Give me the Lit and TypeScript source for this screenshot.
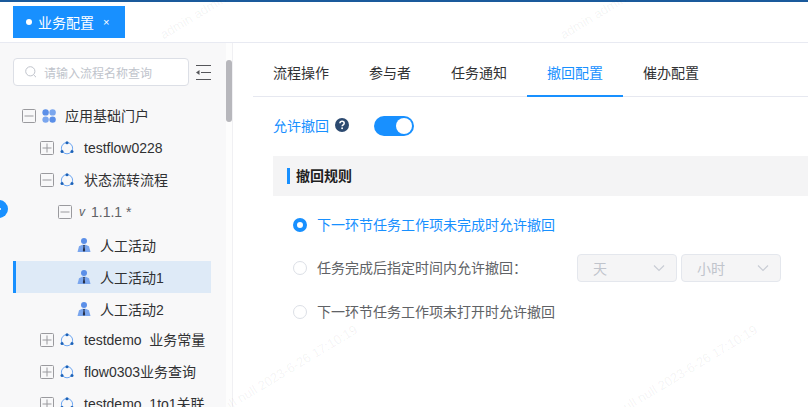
import { LitElement, html, css, svg } from "lit";
import { customElement } from "lit/decorators.js";

const flowIcon = svg`<svg class="ic i-flow" viewBox="0 0 14 14" width="14" height="14"><circle cx="7" cy="7.2" r="5.6" fill="none" stroke="#6aa5f2" stroke-width="1"/><circle cx="7" cy="1.8" r="1.5" fill="#1c62b8"/><circle cx="2" cy="10.4" r="1.5" fill="#1c62b8"/><circle cx="12" cy="10.4" r="1.5" fill="#1c62b8"/></svg>`;
const groupIcon = svg`<svg class="ic" viewBox="0 0 14 14" width="14" height="14"><circle cx="3.6" cy="3.4" r="3.2" fill="#5b8fe8"/><circle cx="10.6" cy="3.4" r="3.2" fill="#7aa6ee"/><circle cx="3.6" cy="10.6" r="3.2" fill="#7aa6ee"/><circle cx="10.6" cy="10.6" r="3.2" fill="#5b8fe8"/></svg>`;
const personIcon = svg`<svg class="ic i-person" viewBox="0 0 14 14" width="14" height="14"><circle cx="7" cy="3" r="3" fill="#5b8fe8"/><path d="M.5 14 L2 8.2 L5.4 6.8 L8.6 6.8 L12 8.2 L13.5 14Z" fill="#7aa6ee"/><path d="M6.2 7h1.6l-.3 1.6.7 4L7 14l-1.2-1.4.7-4z" fill="#26304a"/></svg>`;

type Row = { level: number; box?: "plus" | "minus"; icon?: "group" | "flow" | "person"; ver?: boolean; text: string; selected?: boolean };
const rows: Row[] = [
  { level: 0, box: "minus", icon: "group", text: "应用基础门户" },
  { level: 1, box: "plus", icon: "flow", text: "testflow0228" },
  { level: 1, box: "minus", icon: "flow", text: "状态流转流程" },
  { level: 2, box: "minus", ver: true, text: "1.1.1 *" },
  { level: 3, icon: "person", text: "人工活动" },
  { level: 3, icon: "person", text: "人工活动1", selected: true },
  { level: 3, icon: "person", text: "人工活动2" },
  { level: 1, box: "plus", icon: "flow", text: "testdemo  业务常量" },
  { level: 1, box: "plus", icon: "flow", text: "flow0303业务查询" },
  { level: 1, box: "plus", icon: "flow", text: "testdemo_1to1关联" },
];
const tabs = ["流程操作", "参与者", "任务通知", "撤回配置", "催办配置"];
const marks = [
  { x: 165, y: 42 }, { x: 565, y: 42 }, { x: 155, y: 458 }, { x: 555, y: 458 },
];
const hasCjk = (s: string) => /[\u4e00-\u9fff]/.test(s);

@customElement("app-root")
export class AppRoot extends LitElement {
  static styles = css`
    :host { display: block; width: 808px; height: 407px; overflow: hidden; position: relative; background: #fff;
      font-family: "Liberation Sans", "Noto Sans CJK SC", sans-serif; font-size: 14px; color: #303133; }
    .top { height: 2px; background: #1a5a9c; }
    .head { height: 40px; border-bottom: 1px solid #e8eaf2; display: flex; align-items: center; padding-left: 13px; box-sizing: content-box; }
    .htab { width: 112px; height: 32px; background: #1890ff; color: #fff; display: flex; align-items: center; box-sizing: border-box; padding-left: 13px; }
    .dot { width: 6px; height: 6px; border-radius: 50%; background: #fff; margin-right: 6px; }
    .x { font-size: 11px; margin-left: 9px; }
    .body { display: flex; height: 364px; }
    .side { width: 226px; background: #f8f8f9; padding: 15px 15px 0 13px; box-sizing: border-box; overflow: hidden; flex: none; position: relative; z-index: 1; }
    .track { width: 7px; background: #fdfdfd; flex: none; border-right: 1px solid #f0f0f3; box-sizing: border-box; }
    .searchrow { display: flex; align-items: center; gap: 7px; height: 28px; margin-bottom: 14px; }
    .search { width: 176px; height: 28px; box-sizing: border-box; background: #fff; border: 1px solid #dcdfe6; border-radius: 4px; display: flex; align-items: center; padding-left: 11px; color: #c0c4cc; font-size: 12px; gap: 7px; }
    .tree { width: 198px; }
    .row { height: 32px; display: flex; align-items: center; white-space: pre; overflow: hidden; box-sizing: border-box; }
    .row:nth-child(5) { margin-top: 1px; }
    .row:nth-child(8) { margin-top: -1px; }
    .row.sel { background: #deeaf7; border-left: 3px solid #1890ff; }
    .box { width: 14px; height: 14px; flex: none; display: block; margin-right: 6px; }
    .ic { flex: none; margin-right: 9px; }
    .i-flow { margin-right: 10px; }
    .i-person { margin-left: 1px; margin-right: 9px; }
    .ver { font-style: italic; font-size: 12px; color: #606266; margin-right: 6px; margin-left: 1px; }
    .muted { color: #606266; }
    .main { flex: 1; min-width: 0; }
    .tabs { display: flex; height: 54px; margin-left: 20px; border-bottom: 1px solid #e6e8f0; box-sizing: border-box; }
    .tab { padding: 4px 20px 0; display: flex; align-items: center; height: 54px; box-sizing: border-box; }
    .tab.on { color: #1890ff; border-bottom: 2px solid #1890ff; padding-top: 6px; }
    .content { padding: 19px 0 0 40px; }
    .allow { display: flex; align-items: center; height: 20px; color: #1890ff; }
    .lift { padding-bottom: 2px; }
    .q { margin-left: 6px; margin-bottom: 2px; display: block; }
    .switch { width: 40px; height: 20px; border-radius: 10px; background: #1890ff; margin-left: 25px; display: flex; justify-content: flex-end; align-items: center; padding-right: 2px; box-sizing: border-box; }
    .knob { width: 16px; height: 16px; border-radius: 50%; background: #fff; }
    .sec { height: 40px; background: #f4f4f5; margin-top: 20px; display: flex; align-items: center; padding-left: 14px; font-weight: 700; color: #1f1f1f; }
    .bar { width: 3px; height: 16px; background: #1890ff; margin-right: 6px; }
    .opts { padding-top: 7px; }
    .opt { height: 43.5px; display: flex; align-items: center; color: #606266; padding-left: 20px; }
    .opt.on { color: #1890ff; }
    .radio { width: 14px; height: 14px; border-radius: 50%; background: #fff; border: 1px solid #dcdfe6; box-sizing: border-box; margin-right: 10px; flex: none; }
    .opt.on .radio { border: 4.5px solid #1890ff; }
    .sel-box { width: 100px; height: 28px; box-sizing: border-box; border: 1px solid #e4e7ed; border-radius: 4px; background: #f5f5f6; color: #c0c4cc; display: flex; align-items: center; justify-content: space-between; padding: 0 11px 0 15px; margin-right: 4px; }
    .selects { display: flex; margin-left: 50px; }
    .wm { position: absolute; font-size: 13px; color: rgba(0,0,0,.06); white-space: nowrap; transform: rotate(-31deg); transform-origin: 0 100%; pointer-events: none; line-height: 14px; margin-top: -14px; }
    .sb { position: absolute; left: 226px; top: 60px; width: 6px; height: 62px; border-radius: 3px; background: #b7b7bc; z-index: 2; }
    .float { position: absolute; left: -10px; top: 200px; width: 18px; height: 18px; border-radius: 50%; background: #1890ff; z-index: 2; }
    .float i { position: absolute; left: 9px; top: 8px; width: 2px; height: 2px; background: #fff; border-radius: 50%; }
  `;

  private box(kind: "plus" | "minus") {
    return svg`<svg class="box" viewBox="0 0 14 14"><rect x=".5" y=".5" width="13" height="13" rx="1" fill="none" stroke="#9a9a9e"/><path d="M2.5 7h9" stroke="#9a9a9e"/>${kind === "plus" ? svg`<path d="M7 2.5v9" stroke="#9a9a9e"/>` : ""}</svg>`;
  }

  private row(r: Row) {
    const pad = 9 + r.level * 18 - (r.selected ? 3 : 0);
    const icon = r.icon === "group" ? groupIcon : r.icon === "flow" ? flowIcon : r.icon === "person" ? personIcon : "";
    const lift = hasCjk(r.text) && r.icon !== "person";
    return html`<div class="row ${r.selected ? "sel" : ""}" style="padding-left:${pad}px">
      ${r.box ? this.box(r.box) : ""}${icon}${r.ver ? html`<span class="ver">v</span>` : ""}<span class="${r.ver ? "muted" : ""} ${lift ? "lift" : ""}">${r.text}</span>
    </div>`;
  }

  private chevron() {
    return svg`<svg width="12" height="8" viewBox="0 0 12 8"><path d="M1 1.5 6 6.5 11 1.5" fill="none" stroke="#c8ccd4" stroke-width="1.1"/></svg>`;
  }

  render() {
    return html`
      <div class="top"></div>
      <div class="head"><div class="htab"><span class="dot"></span>业务配置<span class="x">×</span></div></div>
      <div class="body">
        <div class="side">
          <div class="searchrow">
            <div class="search">
              <svg width="12" height="12" viewBox="0 0 12 12"><circle cx="5.3" cy="5.3" r="4.6" fill="none" stroke="#c0c4cc"/><path d="M8.6 8.8 11 11.2" stroke="#c0c4cc"/></svg>
              请输入流程名称查询
            </div>
            <svg width="15" height="15" viewBox="0 0 15 15"><path d="M0 .5h15M5 7.5h10M0 14.5h15" stroke="#55565a"/><path d="M0 7.5 3.5 5v5z" fill="#55565a"/></svg>
          </div>
          <div class="tree">${rows.map((r) => this.row(r))}</div>
        </div>
        <div class="track"></div>
        <div class="main">
          <div class="tabs">${tabs.map((t, i) => html`<div class="tab ${i === 3 ? "on" : ""}">${t}</div>`)}</div>
          <div class="content">
            <div class="allow"><span class="lift">允许撤回</span>
              <svg class="q" width="14" height="14" viewBox="0 0 14 14"><circle cx="7" cy="7" r="7" fill="#2c4a70"/><path d="M4.9 5.3C5 3.9 6 3.3 7.1 3.3c1.2 0 2.1.8 2.1 1.9 0 1.6-2.1 1.6-2.1 3.1" fill="none" stroke="#fff" stroke-width="1.5"/><circle cx="7.1" cy="10.3" r=".95" fill="#fff"/></svg>
              <div class="switch"><div class="knob"></div></div>
            </div>
            <div class="sec"><span class="bar"></span><span class="lift">撤回规则</span></div>
            <div class="opts">
              <div class="opt on"><span class="radio"></span><span class="lift">下一环节任务工作项未完成时允许撤回</span></div>
              <div class="opt"><span class="radio"></span><span class="lift">任务完成后指定时间内允许撤回：</span>
                <div class="selects">
                  <div class="sel-box">天${this.chevron()}</div>
                  <div class="sel-box">小时${this.chevron()}</div>
                </div>
              </div>
              <div class="opt"><span class="radio"></span><span class="lift">下一环节任务工作项未打开时允许撤回</span></div>
            </div>
          </div>
        </div>
      </div>
      <div class="sb"></div>
      <div class="float"><i></i></div>
      ${marks.map((m) => html`<div class="wm" style="left:${m.x}px;top:${m.y}px">admin admin null null 2023-6-26 17:10:19</div>`)}
    `;
  }
}
